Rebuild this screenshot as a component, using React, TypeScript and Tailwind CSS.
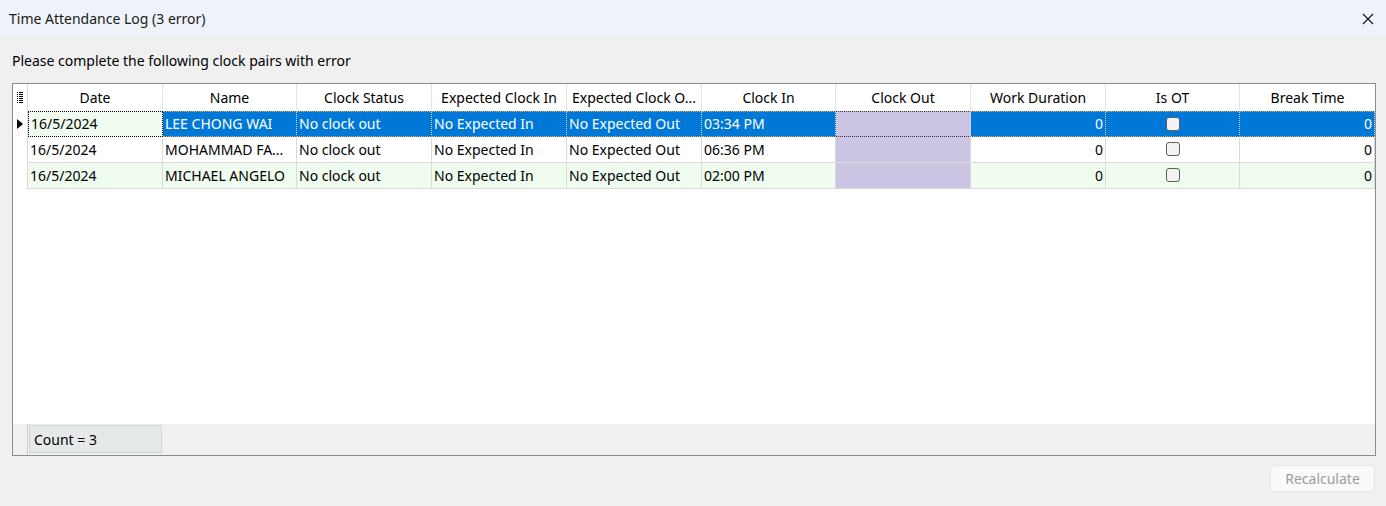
import React from "react";

const cols = [
  { name: "Date", w: 135 },
  { name: "Name", w: 134 },
  { name: "Clock Status", w: 135 },
  { name: "Expected Clock In", w: 135 },
  { name: "Expected Clock O...", w: 135 },
  { name: "Clock In", w: 134 },
  { name: "Clock Out", w: 135 },
  { name: "Work Duration", w: 135 },
  { name: "Is OT", w: 134 },
  { name: "Break Time", w: 135 },
];

const rows = [
  ["16/5/2024", "LEE CHONG WAI", "No clock out", "No Expected In", "No Expected Out", "03:34 PM", "", "0", "", "0"],
  ["16/5/2024", "MOHAMMAD FA...", "No clock out", "No Expected In", "No Expected Out", "06:36 PM", "", "0", "", "0"],
  ["16/5/2024", "MICHAEL ANGELO", "No clock out", "No Expected In", "No Expected Out", "02:00 PM", "", "0", "", "0"],
];

function Checkbox() {
  return <div className="w-[14px] h-[14px] rounded-[3px] border border-[#5f5f5f] bg-[#f3f3f3]" />;
}

export default function App() {
  return (
    <div
      className="w-[1386px] h-[506px] bg-[#f0f0f0] text-[14px] text-[#000] overflow-hidden flex flex-col"
      style={{ fontFamily: '"Noto Sans", "Open Sans", sans-serif' }}
    >
      <div className="h-[37px] bg-[#eef3f9] flex items-center justify-between pl-[9px] pr-[12px] shrink-0">
        <span className="text-[14px] text-[#1a1a1a]">Time Attendance Log (3 error)</span>
        <svg width="12" height="12" viewBox="0 0 12 12">
          <path d="M1 1 L11 11 M11 1 L1 11" stroke="#111" strokeWidth="1.1" />
        </svg>
      </div>
      <div className="h-[46px] pl-[12px] flex items-center">
        <span className="text-[14px]">Please complete the following clock pairs with error</span>
      </div>
      <div className="ml-[12px] w-[1364px] h-[373px] border border-[#8c8c8c] bg-white flex flex-col">
        {/* header */}
        <div className="flex h-[27px] bg-white">
          <div className="w-[15px] border-r border-[#d9d9d9] flex items-center justify-center">
            <svg width="6" height="12" viewBox="0 0 6 12" shapeRendering="crispEdges">
              {[0, 2, 4, 6, 8, 10].map((y) => (
                <g key={y}>
                  <rect x="0" y={y} width="1" height="1" fill="#000" />
                  <rect x="2" y={y} width="4" height="1" fill="#000" />
                </g>
              ))}
            </svg>
          </div>
          {cols.map((c, i) => (
            <div
              key={i}
              style={{ width: c.w }}
              className="border-r border-[#e3e3e3] flex items-center justify-center last:border-r-0 whitespace-nowrap"
            >
              {c.name}
            </div>
          ))}
        </div>
        {rows.map((r, ri) => {
          const sel = ri === 0;
          const rowBg = ri === 2 ? "bg-[#effcef]" : "bg-white";
          return (
            <div key={ri} className={`flex h-[26px] ${rowBg}`}>
              <div className="w-[15px] border-r border-[#d9d9d9] bg-white flex items-center pl-[4px]">
                {sel && (
                  <svg width="6" height="10" viewBox="0 0 6 10">
                    <path d="M0 0 L6 5 L0 10 Z" fill="#000" />
                  </svg>
                )}
              </div>
              {cols.map((c, ci) => {
                let bg = "";
                let txt = "text-black";
                let extra = "border-b border-r border-[#dadada]";
                if (ci === 6) bg = "bg-[#cbc4e2]";
                if (sel) {
                  if (ci === 0) {
                    bg = "bg-[#effcef]";
                    extra = "border border-dotted border-black";
                  } else if (ci !== 6) {
                    bg = "bg-[#0078d7]";
                    txt = "text-white";
                    extra = "border-y border-dotted border-y-[#e8a44a] border-r border-r-[#dadada]";
                  } else {
                    extra = "border-y border-dotted border-y-[#333] border-r border-r-[#dadada]";
                  }
                }
                const val = r[ci];
                const right = ci === 7 || ci === 9;
                return (
                  <div
                    key={ci}
                    style={{ width: c.w }}
                    className={`${bg} ${txt} ${extra} flex items-center whitespace-nowrap overflow-hidden pb-[1px] ${
                      right ? "justify-end pr-[2px]" : ci === 8 ? "justify-center" : "pl-[2px]"
                    }`}
                  >
                    {ci === 8 ? <Checkbox /> : val}
                  </div>
                );
              })}
            </div>
          );
        })}
        <div className="flex-1" />
        <div className="h-[31px] bg-[#f0f0f0] flex">
          <div className="w-[15px] border-r border-[#d0d0d0]" />
          <div className="pl-[1px] pt-[1px]">
            <div className="w-[133px] h-[28px] bg-[#e6e9ea] border border-[#d4d4d4] flex items-center pl-[4px]">
              Count = 3
            </div>
          </div>
        </div>
      </div>
      <div className="flex justify-end pr-[11px] pt-[9px]">
        <div className="w-[105px] h-[27px] rounded-[4px] bg-[#f9f9f9] border border-[#e6e6e6] flex items-center justify-center text-[#9d9d9d]">
          Recalculate
        </div>
      </div>
    </div>
  );
}
